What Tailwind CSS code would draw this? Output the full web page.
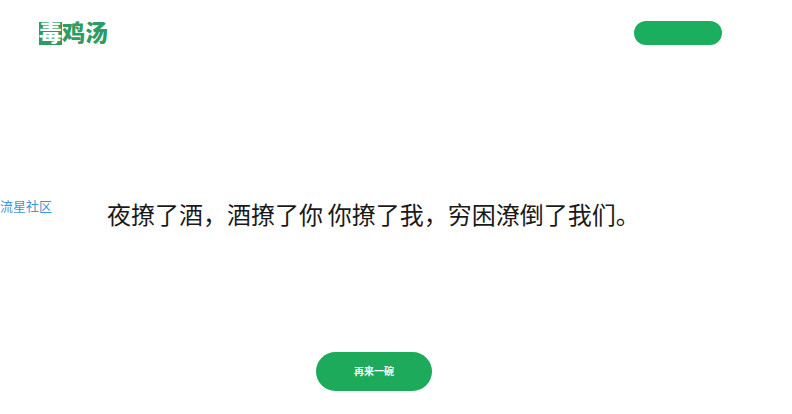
<!DOCTYPE html>
<html lang="zh-CN">

<head>
    <meta charset="UTF-8">
    <title>毒鸡汤</title>
    <script src="https://cdn.jsdelivr.net/npm/@tailwindcss/browser@4"></script>
</head>

<body class="bg-white font-['Liberation_Sans','Noto_Sans_CJK_SC',sans-serif]">
    <div class="w-[792px] h-[414px] flex flex-col overflow-hidden">
        <!-- Header -->
        <div class="h-[66px] pl-[39px] pr-[70px] flex items-center justify-between">
            <div class="flex items-center text-[23px] leading-[23px] font-black text-[#2f9a62]">
                <span class="w-[23px] h-[23px] flex items-center justify-center bg-[#2f9a62] text-white">毒</span>
                <span>鸡汤</span>
            </div>
            <div class="w-[88px] h-[24px] rounded-full bg-[#1bae5e]"></div>
        </div>
        <!-- Sentence -->
        <div class="flex-1 flex items-center pt-[14px]">
            <a class="w-[107px] text-[13px] leading-[18px] text-[#3f94dc] -mt-[18px]">流星社区</a>
            <p class="text-[24px] leading-[32px] text-[#1a1a1a] [word-spacing:-2px]">夜撩了酒，酒撩了你 你撩了我，穷困潦倒了我们。</p>
        </div>
        <!-- Button -->
        <div class="h-[62px] pl-[316px]">
            <button class="w-[116px] h-[39px] rounded-full bg-[#1eaa5b] text-white text-[10px] font-bold">再来一碗</button>
        </div>
    </div>
</body>

</html>
